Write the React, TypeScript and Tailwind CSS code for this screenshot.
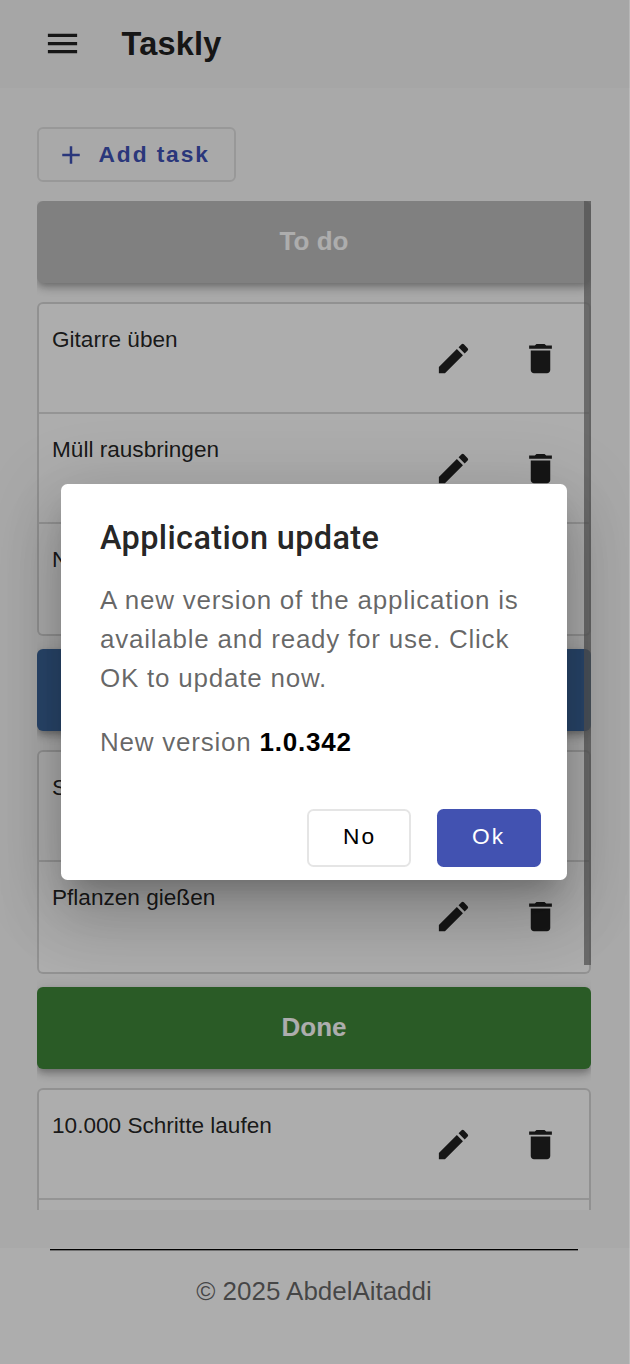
import React from "react";

const EDIT =
  "M3 17.25V21h3.75L17.81 9.94l-3.75-3.75L3 17.25zM20.71 7.04a.996.996 0 0 0 0-1.41l-2.34-2.34a.996.996 0 0 0-1.41 0l-1.83 1.83 3.75 3.75 1.83-1.83z";
const TRASH =
  "M6 19c0 1.1.9 2 2 2h8c1.1 0 2-.9 2-2V7H6v12zM19 4h-3.5l-1-1h-5l-1 1H5v2h14V4z";
const MENU = "M3 18h18v-2H3v2zm0-5h18v-2H3v2zm0-7v2h18V6H3z";
const PLUS = "M19 13h-6v6h-2v-6H5v-2h6V5h2v6h6v2z";

function Icon({ d, className }: { d: string; className: string }) {
  return (
    <svg viewBox="0 0 24 24" fill="currentColor" className={className} aria-hidden="true">
      <path d={d} />
    </svg>
  );
}

function TaskRow({ title }: { title: string }) {
  return (
    <li className="flex h-[110px] items-start border-b-2 border-black/14 pl-[13px] pr-[28.6px] last:border-b-0">
      <span className="mt-[21px] flex-1 text-[22.6px] leading-[30px] text-black/87">{title}</span>
      <button className="mt-[34.6px]" aria-label="Edit">
        <Icon d={EDIT} className="size-[39px]" />
      </button>
      <button className="mt-[34.6px] ml-[48.6px]" aria-label="Delete">
        <Icon d={TRASH} className="size-[39px]" />
      </button>
    </li>
  );
}

function Section({ name, color, tasks }: { name?: string; color: string; tasks: string[] }) {
  return (
    <section className="shrink-0">
      <h2
        className={`flex h-[82px] items-center justify-center rounded-[6px] pb-[2px] text-[26px] font-bold text-white shadow-[0_3px_6px_-1px_rgba(0,0,0,0.2),0_6px_8px_0_rgba(0,0,0,0.14),0_2px_16px_0_rgba(0,0,0,0.12)] ${color}`}
      >
        {name}
      </h2>
      <ul className="relative mt-[19px] rounded-[6px] border-2 border-black/14 bg-white bg-clip-padding">
        {tasks.map((t, i) => (
          <TaskRow key={i} title={t} />
        ))}
      </ul>
    </section>
  );
}

export default function App() {
  return (
    <div className="relative flex h-[1364px] w-[630px] flex-col overflow-hidden bg-[#fafafa] font-['Liberation_Sans',Arial,sans-serif] text-[#212121]">
      <header className="flex h-[88px] shrink-0 items-center bg-[#f5f5f5] pl-[43px]">
        <Icon d={MENU} className="mb-[2px] size-[39px]" />
        <h1 className="ml-[39.5px] text-[32.5px] font-bold tracking-[0.2px]">Taskly</h1>
      </header>

      <main className="flex h-[1160px] shrink-0 flex-col px-[37px] pt-[39px] pr-[39px]">
        <button className="flex h-[55px] w-[199px] shrink-0 items-center rounded-[6px] border-2 border-black/10 pl-[17px] text-[#3f51b5]">
          <Icon d={PLUS} className="mt-px size-[30px]" />
          <span className="ml-[12.5px] text-[22.75px] font-bold tracking-[1.9px]">Add task</span>
        </button>

        <div className="relative mt-[19px] flex h-[1009px] flex-col gap-[13px] overflow-hidden">
          <Section name="To do" color="bg-[#bdbdbd]" tasks={["Gitarre üben", "Müll rausbringen", "N"]} />
          <Section color="bg-[#3d679e]" tasks={["S", "Pflanzen gießen"]} />
          <Section name="Done" color="bg-[#3f8739]" tasks={["10.000 Schritte laufen", ""]} />
          <div className="absolute top-0 right-0 h-[764px] w-[7px] bg-[#7b7b7b]/75" />
        </div>
      </main>

      <footer className="flex flex-1 flex-col bg-white px-[50px] pr-[52px]">
        <div className="mt-px h-[2px] border-b border-black/35 bg-black bg-clip-padding" />
        <p className="mt-[24px] text-center text-[26px] leading-[32px] tracking-[-0.03px] text-black/60">© 2025 AbdelAitaddi</p>
      </footer>

      <div className="absolute inset-0 flex items-start border-r border-white/20 bg-black/32 pt-[484px] pl-[61px]">
        <div
          role="dialog"
          className="flex h-[396px] w-[505.5px] flex-col rounded-[6.5px] bg-white shadow-[0_18px_24px_-11px_rgba(0,0,0,0.2),0_39px_62px_5px_rgba(0,0,0,0.14),0_15px_75px_13px_rgba(0,0,0,0.12)]"
        >
          <h2 className="mt-[34px] ml-[39px] font-[Roboto,sans-serif] text-[32.5px] leading-[40px] font-medium tracking-[0.35px] text-black/87">
            Application update
          </h2>
          <p className="mt-[23px] ml-[39px] w-[430px] text-[26px] leading-[39px] tracking-[0.77px] text-black/60">
            A new version of the application is available and ready for use. Click OK to update now.
          </p>
          <p className="mt-[25px] ml-[39px] text-[26px] leading-[39px] tracking-[0.77px] text-black/60">
            New version <b className="text-black">1.0.342</b>
          </p>
          <div className="mt-auto mr-[26px] mb-[13px] flex justify-end gap-[26px]">
            <button className="h-[58px] w-[104px] rounded-[6.5px] border-2 border-black/10 pb-1 pl-[2px] text-[22.75px] tracking-[2.03px] text-black">
              No
            </button>
            <button className="h-[58px] w-[104px] rounded-[6.5px] bg-[#4252b1] pb-1 text-[22.75px] tracking-[2.03px] text-white">
              Ok
            </button>
          </div>
        </div>
      </div>
    </div>
  );
}
